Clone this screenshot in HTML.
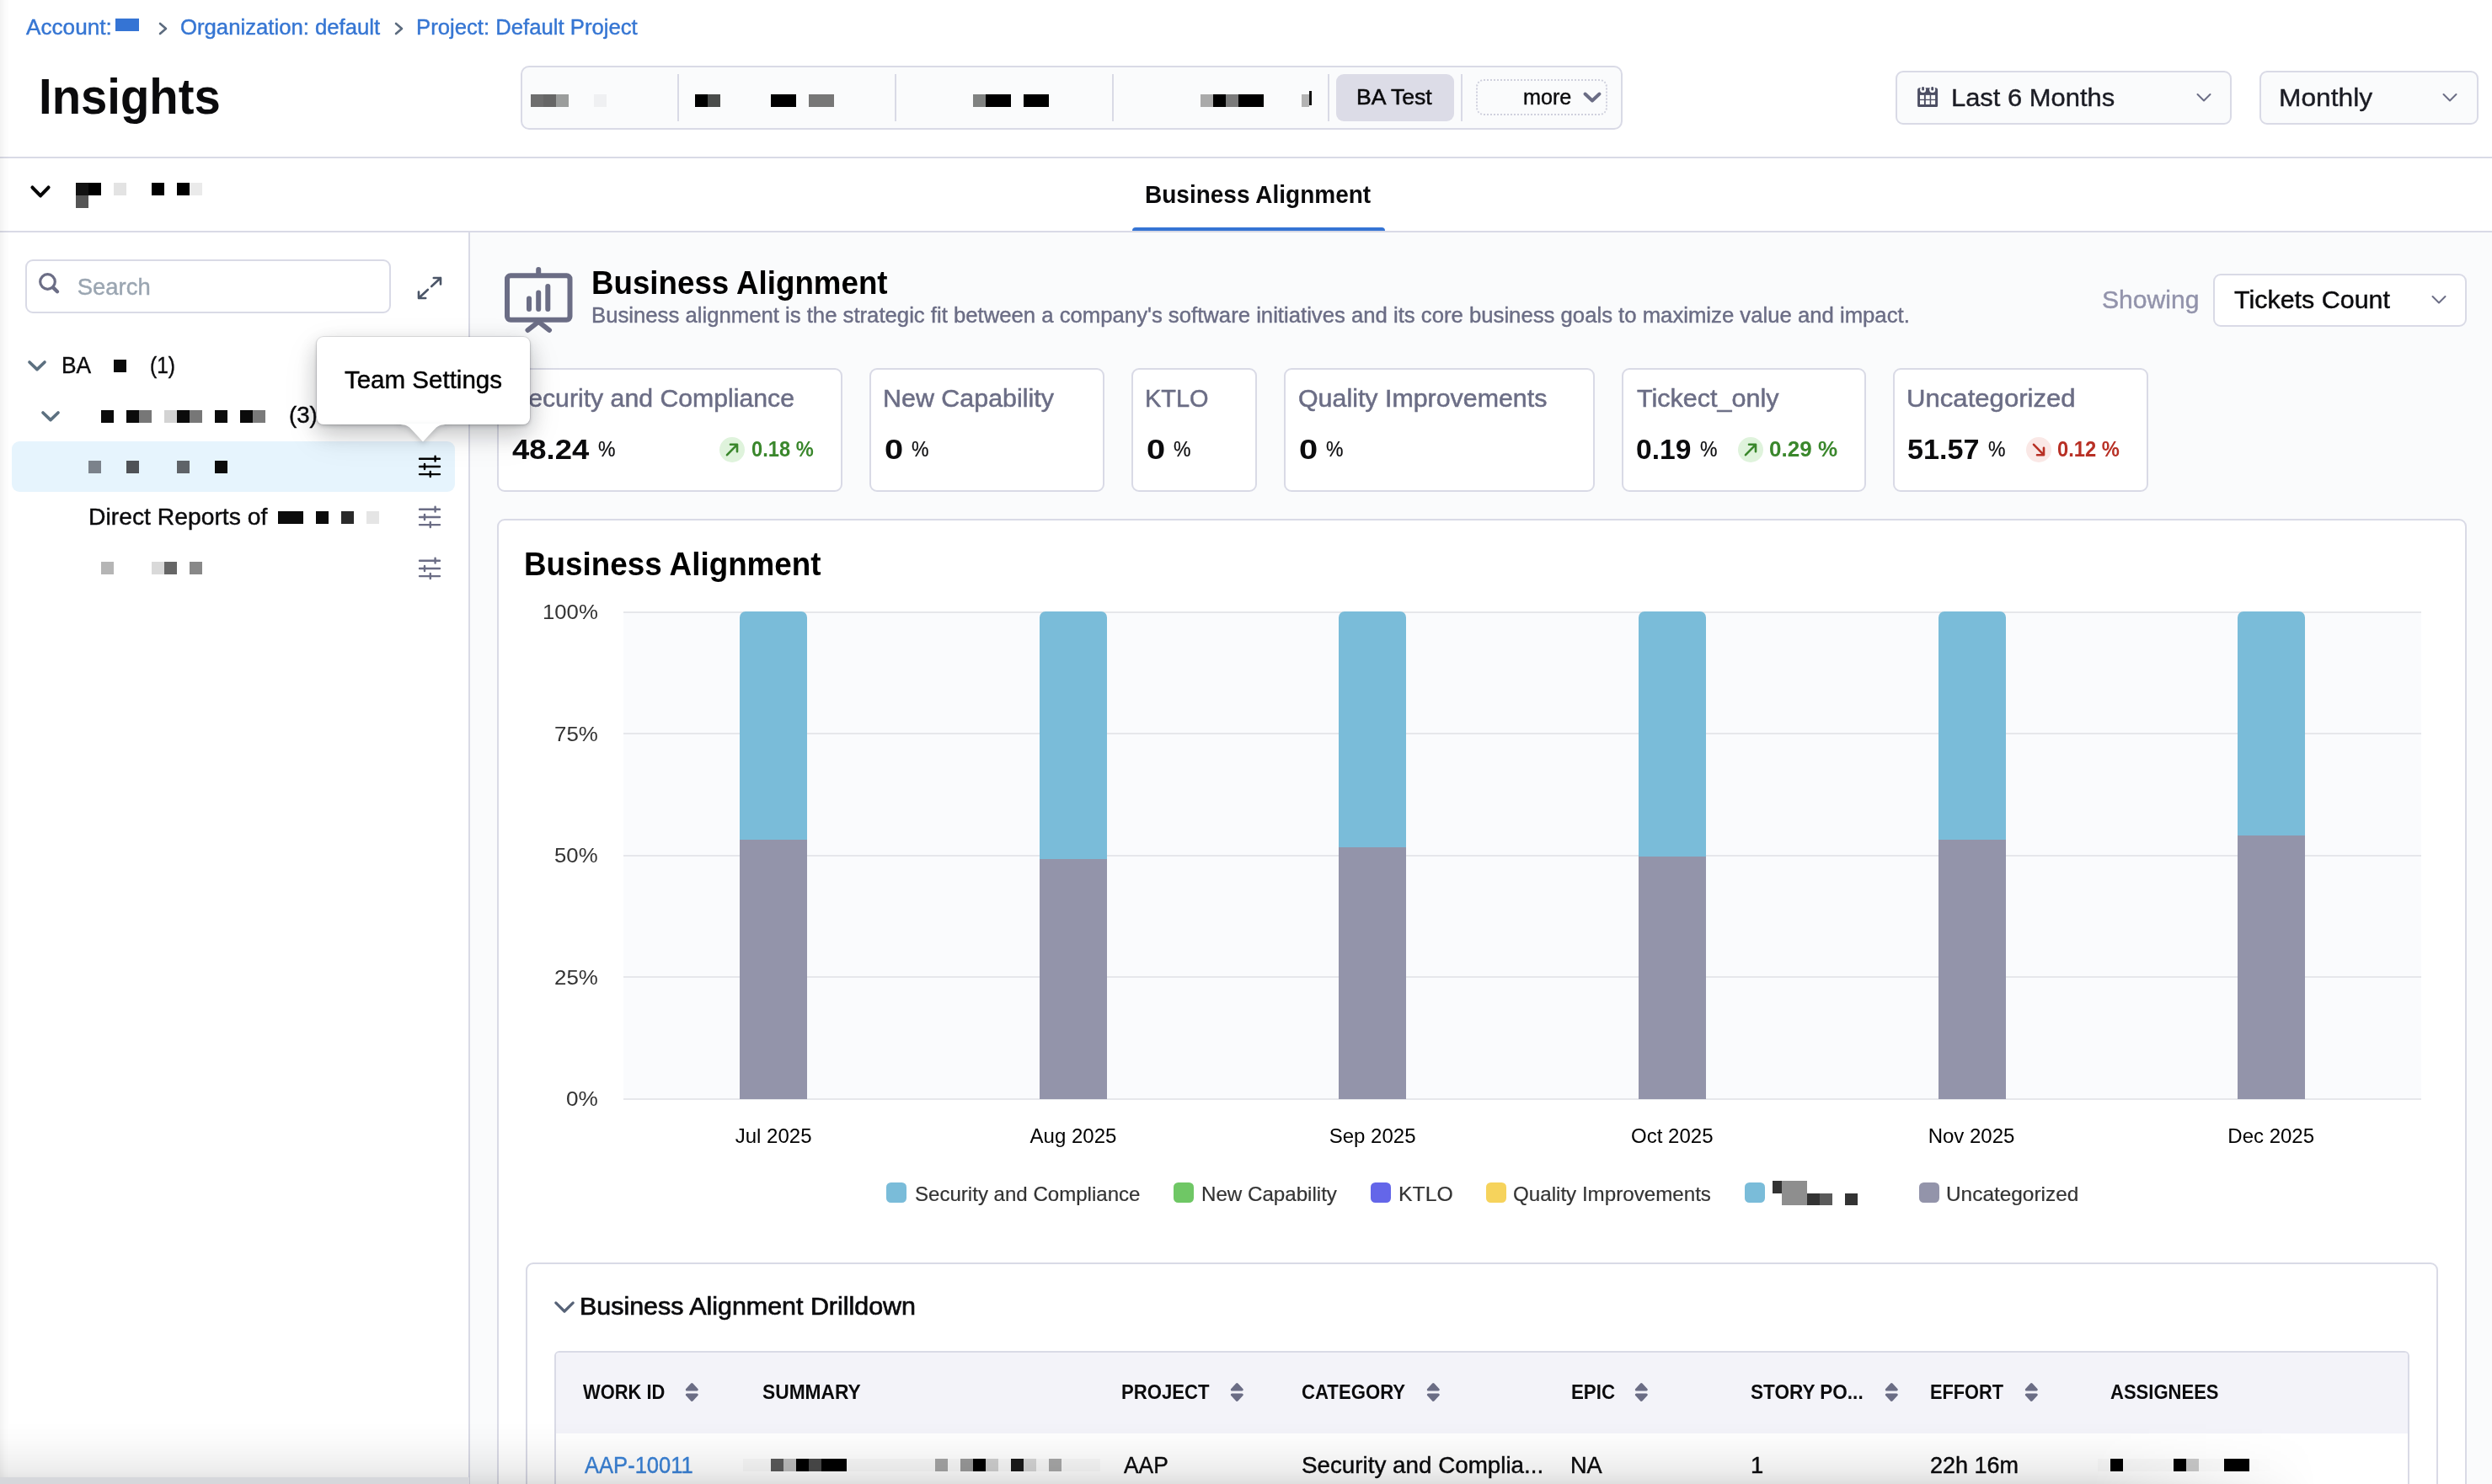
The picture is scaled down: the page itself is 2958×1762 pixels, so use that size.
<!DOCTYPE html>
<html lang="en"><head><meta charset="utf-8"><title>Insights - Business Alignment</title>
<style>
html,body{margin:0;padding:0;background:#fff;}
body{width:2958px;height:1762px;position:relative;overflow:hidden;font-family:"Liberation Sans",sans-serif;}
#app{position:absolute;left:0;top:0;width:2958px;height:1762px;will-change:transform;}
.b{position:absolute;box-sizing:border-box;display:block;}
.t{position:absolute;white-space:nowrap;display:block;transform-origin:0 0;}
</style></head><body><div id="app">
<div class="b" style="left:558px;top:276px;width:2400px;height:1486px;background:#fafbfc;"></div>
<div class="b" style="left:0px;top:186px;width:2958px;height:2px;background:#d9dae6;"></div>
<div class="b" style="left:0px;top:274px;width:2958px;height:2px;background:#d9dae6;"></div>
<div class="b" style="left:556px;top:276px;width:2px;height:1486px;background:#d9dae6;"></div>
<span class="t" style="left:30.50px;top:20.27px;font-size:25.32px;line-height:25.32px;color:#3676d3;transform:scaleX(1.0332);-webkit-text-stroke:0.42px #3676d3;">Account:</span>
<div class="b" style="left:136.5px;top:22px;width:28.5px;height:14.5px;background:#3574d4;"></div>
<svg class="b" style="left:187.5px;top:26px" width="12" height="16" viewBox="0 0 12 16"><path d="M2 2 L9 8 L2 14" fill="none" stroke="#5c6b7e" stroke-width="2.6" stroke-linecap="round" stroke-linejoin="round"/></svg>
<span class="t" style="left:213.84px;top:20.27px;font-size:25.32px;line-height:25.32px;color:#3676d3;transform:scaleX(1.0153);-webkit-text-stroke:0.42px #3676d3;">Organization: default</span>
<svg class="b" style="left:467.5px;top:26px" width="12" height="16" viewBox="0 0 12 16"><path d="M2 2 L9 8 L2 14" fill="none" stroke="#5c6b7e" stroke-width="2.6" stroke-linecap="round" stroke-linejoin="round"/></svg>
<span class="t" style="left:493.94px;top:20.27px;font-size:25.32px;line-height:25.32px;color:#3676d3;transform:scaleX(1.0150);-webkit-text-stroke:0.42px #3676d3;">Project: Default Project</span>
<span class="t" style="left:45.94px;top:85.89px;font-size:59.08px;line-height:59.08px;color:#0b0b0d;font-weight:700;transform:scaleX(0.9523);">Insights</span>
<div class="b" style="left:618px;top:78px;width:1308px;height:76px;background:#fafbfc;border:2px solid #d9dae6;border-radius:10px;"></div>
<div class="b" style="left:804px;top:88px;width:2px;height:56px;background:#d9dae6;"></div>
<div class="b" style="left:1062px;top:88px;width:2px;height:56px;background:#d9dae6;"></div>
<div class="b" style="left:1320px;top:88px;width:2px;height:56px;background:#d9dae6;"></div>
<div class="b" style="left:1576px;top:88px;width:2px;height:56px;background:#d9dae6;"></div>
<div class="b" style="left:1734px;top:88px;width:2px;height:56px;background:#d9dae6;"></div>
<div class="b" style="left:630px;top:112px;width:15px;height:15px;background:#6e6e6e;"></div>
<div class="b" style="left:645px;top:112px;width:15px;height:15px;background:#666666;"></div>
<div class="b" style="left:660px;top:112px;width:15px;height:15px;background:#9b9d9c;"></div>
<div class="b" style="left:705px;top:112px;width:15px;height:15px;background:#eff0f2;"></div>
<div class="b" style="left:825px;top:112px;width:15px;height:15px;background:#000;"></div>
<div class="b" style="left:840px;top:112px;width:15px;height:15px;background:#4a4c4b;"></div>
<div class="b" style="left:915px;top:112px;width:30px;height:15px;background:#000;"></div>
<div class="b" style="left:960px;top:112px;width:30px;height:15px;background:#777;"></div>
<div class="b" style="left:1155px;top:112px;width:15px;height:15px;background:#808281;"></div>
<div class="b" style="left:1170px;top:112px;width:30px;height:15px;background:#000;"></div>
<div class="b" style="left:1215px;top:112px;width:30px;height:15px;background:#000;"></div>
<div class="b" style="left:1425px;top:112px;width:15px;height:15px;background:#aaa;"></div>
<div class="b" style="left:1440px;top:112px;width:15px;height:15px;background:#000;"></div>
<div class="b" style="left:1455px;top:112px;width:15px;height:15px;background:#7a7a7a;"></div>
<div class="b" style="left:1470px;top:112px;width:30px;height:15px;background:#000;"></div>
<div class="b" style="left:1545px;top:112px;width:9px;height:15px;background:#b3b3b3;"></div>
<div class="b" style="left:1554px;top:108px;width:3px;height:17px;background:#111;"></div>
<div class="b" style="left:1586px;top:88px;width:140px;height:56px;background:#dcdce7;border-radius:9px;"></div>
<span class="t" style="left:1610.47px;top:102.57px;font-size:25.32px;line-height:25.32px;color:#0b0b0d;transform:scaleX(1.0504);-webkit-text-stroke:0.5px #0b0b0d;">BA Test</span>
<div class="b" style="left:1752px;top:94px;width:156px;height:43px;border:2px solid #cfd0dd;border-radius:9px;border-style:dotted;"></div>
<span class="t" style="left:1808.37px;top:102.57px;font-size:25.32px;line-height:25.32px;color:#0b0b0d;transform:scaleX(0.9927);-webkit-text-stroke:0.42px #0b0b0d;">more</span>
<svg class="b" style="left:1878px;top:108px" width="24" height="16" viewBox="0 0 24 16"><path d="M3.5 3.5 L12 11.5 L20.5 3.5" fill="none" stroke="#6b6d85" stroke-width="4" stroke-linecap="round" stroke-linejoin="round"/></svg>
<div class="b" style="left:2250px;top:84px;width:399px;height:64px;background:#fafbfc;border:2px solid #d9dae6;border-radius:9px;"></div>
<svg class="b" style="left:2275px;top:102px" width="26" height="26" viewBox="0 0 26 26"><path d="M1.1 4.7 a2.5 2.5 0 0 1 2.5 -2.5 h19 a2.5 2.5 0 0 1 2.5 2.5 v18.8 a1.5 1.5 0 0 1 -1.5 1.5 h-21 a1.5 1.5 0 0 1 -1.5 -1.5z" fill="#4c4e63"/>
<g fill="#fafbfc"><circle cx="7.6" cy="4.4" r="3.5"/><circle cx="18.7" cy="4.4" r="3.5"/>
<rect x="4" y="10.9" width="4.9" height="4.9"/><rect x="10.8" y="10.9" width="4.9" height="4.9"/><rect x="17.2" y="10.9" width="4.9" height="4.9"/>
<rect x="4" y="17.1" width="4.9" height="4.9"/><rect x="10.8" y="17.1" width="4.9" height="4.9"/><rect x="17.2" y="17.1" width="4.9" height="4.9"/></g>
<rect x="6.25" y="1" width="2.7" height="4.6" rx="1.35" fill="#4c4e63"/><rect x="17.35" y="1" width="2.7" height="4.6" rx="1.35" fill="#4c4e63"/></svg>
<span class="t" style="left:2315.53px;top:100.59px;font-size:29.54px;line-height:29.54px;color:#1b1c24;transform:scaleX(1.0464);-webkit-text-stroke:0.4px #1b1c24;">Last 6 Months</span>
<svg class="b" style="left:2607px;top:110px" width="18" height="12" viewBox="0 0 18 12"><path d="M1.5 2 L9 9.5 L16.5 2" fill="none" stroke="#6b6d85" stroke-width="2" stroke-linecap="round" stroke-linejoin="round"/></svg>
<div class="b" style="left:2682px;top:84px;width:260px;height:64px;background:#fafbfc;border:2px solid #d9dae6;border-radius:9px;"></div>
<span class="t" style="left:2705.46px;top:100.59px;font-size:29.54px;line-height:29.54px;color:#1b1c24;transform:scaleX(1.0755);-webkit-text-stroke:0.4px #1b1c24;">Monthly</span>
<svg class="b" style="left:2899px;top:110px" width="18" height="12" viewBox="0 0 18 12"><path d="M1.5 2 L9 9.5 L16.5 2" fill="none" stroke="#6b6d85" stroke-width="2" stroke-linecap="round" stroke-linejoin="round"/></svg>
<svg class="b" style="left:34px;top:218px" width="28" height="20" viewBox="0 0 28 20"><path d="M4.5 4.6 L14 14.4 L23.5 4.6" fill="none" stroke="#050506" stroke-width="4.2" stroke-linecap="round" stroke-linejoin="round"/></svg>
<div class="b" style="left:90px;top:217px;width:15px;height:15px;background:#111;"></div>
<div class="b" style="left:105px;top:217px;width:15px;height:15px;background:#000;"></div>
<div class="b" style="left:90px;top:232px;width:15px;height:15px;background:#555;"></div>
<div class="b" style="left:135px;top:217px;width:15px;height:15px;background:#e3e3e3;"></div>
<div class="b" style="left:180px;top:217px;width:15px;height:15px;background:#000;"></div>
<div class="b" style="left:210px;top:217px;width:15px;height:15px;background:#000;"></div>
<div class="b" style="left:225px;top:217px;width:15px;height:15px;background:#eaeaea;"></div>
<span class="t" style="left:1359.38px;top:215.89px;font-size:29.54px;line-height:29.54px;color:#0b0b0d;font-weight:700;transform:scaleX(0.9483);">Business Alignment</span>
<div class="b" style="left:1344px;top:270px;width:300px;height:4px;background:#3574d4;border-radius:5px 5px 0 0;"></div>
<div class="b" style="left:30px;top:308px;width:434px;height:64px;background:#fff;border:2px solid #d9dae6;border-radius:9px;"></div>
<svg class="b" style="left:44px;top:322px" width="28" height="28" viewBox="0 0 28 28"><circle cx="12.5" cy="12.5" r="8.8" fill="none" stroke="#6b6d85" stroke-width="3.2"/><path d="M19.3 19.6 L24 24.2" stroke="#6b6d85" stroke-width="4.4" stroke-linecap="round"/></svg>
<span class="t" style="left:91.77px;top:326.68px;font-size:27.43px;line-height:27.43px;color:#9aa5b1;-webkit-text-stroke:0.42px #9aa5b1;">Search</span>
<svg class="b" style="left:494px;top:326px" width="32" height="32" viewBox="0 0 32 32"><g fill="none" stroke="#4b5567" stroke-width="2.6" stroke-linecap="round" stroke-linejoin="round"><path d="M20.8 4 H29 V11.5 M29 4 L18.2 14"/><path d="M11.2 28 H3 V20.5 M3 28 L13.8 18"/></g></svg>
<svg class="b" style="left:32px;top:426.5px" width="24" height="16" viewBox="0 0 24 16"><path d="M3 3 L12 11.6 L21 3" fill="none" stroke="#5c7080" stroke-width="3.7" stroke-linecap="round" stroke-linejoin="round"/></svg>
<span class="t" style="left:73.29px;top:419.78px;font-size:27.43px;line-height:27.43px;color:#0b0b0d;transform:scaleX(0.9609);-webkit-text-stroke:0.42px #0b0b0d;">BA</span>
<div class="b" style="left:135px;top:427px;width:15px;height:15px;background:#0b0b0b;"></div>
<span class="t" style="left:177.53px;top:419.78px;font-size:27.43px;line-height:27.43px;color:#0b0b0d;transform:scaleX(0.8914);-webkit-text-stroke:0.42px #0b0b0d;">(1)</span>
<svg class="b" style="left:48px;top:486.5px" width="24" height="16" viewBox="0 0 24 16"><path d="M3 3 L12 11.6 L21 3" fill="none" stroke="#5c7080" stroke-width="3.7" stroke-linecap="round" stroke-linejoin="round"/></svg>
<div class="b" style="left:120px;top:487px;width:15px;height:15px;background:#0b0b0b;"></div>
<div class="b" style="left:150px;top:487px;width:15px;height:15px;background:#0b0b0b;"></div>
<div class="b" style="left:165px;top:487px;width:15px;height:15px;background:#777;"></div>
<div class="b" style="left:195px;top:487px;width:15px;height:15px;background:#d3d3d3;"></div>
<div class="b" style="left:210px;top:487px;width:15px;height:15px;background:#0b0b0b;"></div>
<div class="b" style="left:225px;top:487px;width:15px;height:15px;background:#777;"></div>
<div class="b" style="left:255px;top:487px;width:15px;height:15px;background:#0b0b0b;"></div>
<div class="b" style="left:285px;top:487px;width:15px;height:15px;background:#0b0b0b;"></div>
<div class="b" style="left:300px;top:487px;width:15px;height:15px;background:#7a7a7a;"></div>
<span class="t" style="left:343.34px;top:478.78px;font-size:27.43px;line-height:27.43px;color:#0b0b0d;transform:scaleX(1.0070);-webkit-text-stroke:0.42px #0b0b0d;">(3)</span>
<div class="b" style="left:14px;top:524px;width:526px;height:60px;background:#e6f4fd;border-radius:9px;"></div>
<div class="b" style="left:105px;top:547px;width:15px;height:15px;background:#7b828b;"></div>
<div class="b" style="left:150px;top:547px;width:15px;height:15px;background:#4f5257;"></div>
<div class="b" style="left:210px;top:547px;width:15px;height:15px;background:#5f6368;"></div>
<div class="b" style="left:255px;top:547px;width:15px;height:15px;background:#0b0b0b;"></div>
<svg class="b" style="left:496px;top:540px" width="28" height="28" viewBox="0 0 28 28"><g stroke="#000" stroke-width="2.4" stroke-linecap="round" fill="none"><path d="M2 4.8 H26 M2 14 H26 M2 23.1 H26"/><path d="M20.6 1.8 V7.6 M8 11 V17 M14.8 20 V26"/></g></svg>
<span class="t" style="left:104.54px;top:600.18px;font-size:27.43px;line-height:27.43px;color:#0b0b0d;transform:scaleX(1.0321);-webkit-text-stroke:0.42px #0b0b0d;">Direct Reports of</span>
<div class="b" style="left:330px;top:607px;width:30px;height:15px;background:#0b0b0b;"></div>
<div class="b" style="left:375px;top:607px;width:15px;height:15px;background:#0b0b0b;"></div>
<div class="b" style="left:405px;top:607px;width:15px;height:15px;background:#2a2a2a;"></div>
<div class="b" style="left:435px;top:607px;width:15px;height:15px;background:#e5e5e5;"></div>
<svg class="b" style="left:496px;top:600px" width="28" height="28" viewBox="0 0 28 28"><g stroke="#6b6d85" stroke-width="2.4" stroke-linecap="round" fill="none"><path d="M2 4.8 H26 M2 14 H26 M2 23.1 H26"/><path d="M20.6 1.8 V7.6 M8 11 V17 M14.8 20 V26"/></g></svg>
<div class="b" style="left:120px;top:667px;width:15px;height:15px;background:#b5b5b5;"></div>
<div class="b" style="left:180px;top:667px;width:15px;height:15px;background:#d9d9d9;"></div>
<div class="b" style="left:195px;top:667px;width:15px;height:15px;background:#666;"></div>
<div class="b" style="left:225px;top:667px;width:15px;height:15px;background:#888;"></div>
<svg class="b" style="left:496px;top:660.5px" width="28" height="28" viewBox="0 0 28 28"><g stroke="#6b6d85" stroke-width="2.4" stroke-linecap="round" fill="none"><path d="M2 4.8 H26 M2 14 H26 M2 23.1 H26"/><path d="M20.6 1.8 V7.6 M8 11 V17 M14.8 20 V26"/></g></svg>
<svg class="b" style="left:596px;top:314px" width="88" height="84" viewBox="0 0 88 84"><g fill="none" stroke="#6b6d85" stroke-width="6" stroke-linecap="round" stroke-linejoin="round">
<rect x="6" y="13.3" width="74.5" height="52.4" rx="4"/>
<path d="M43.2 6 V12"/><path d="M43.2 68 L30.5 78 M43.2 68 L56 78"/>
<path d="M32 40.5 V53 M43.2 33.5 V53 M54.3 26 V53"/></g></svg>
<span class="t" style="left:701.61px;top:316.65px;font-size:37.98px;line-height:37.98px;color:#000;font-weight:700;transform:scaleX(0.9670);">Business Alignment</span>
<span class="t" style="left:701.94px;top:362.27px;font-size:25.32px;line-height:25.32px;color:#6b6d85;transform:scaleX(1.0153);-webkit-text-stroke:0.42px #6b6d85;">Business alignment is the strategic fit between a company&#x27;s software initiatives and its core business goals to maximize value and impact.</span>
<span class="t" style="left:2495.15px;top:340.99px;font-size:29.54px;line-height:29.54px;color:#9293ab;transform:scaleX(1.0192);-webkit-text-stroke:0.42px #9293ab;">Showing</span>
<div class="b" style="left:2627px;top:324.5px;width:301px;height:63px;background:#fff;border:2px solid #d9dae6;border-radius:9px;"></div>
<span class="t" style="left:2652.09px;top:340.99px;font-size:29.54px;line-height:29.54px;color:#0b0b0d;transform:scaleX(1.0307);-webkit-text-stroke:0.42px #0b0b0d;">Tickets Count</span>
<svg class="b" style="left:2886px;top:350px" width="18" height="12" viewBox="0 0 18 12"><path d="M1.5 2 L9 9.5 L16.5 2" fill="none" stroke="#6b6d85" stroke-width="2" stroke-linecap="round" stroke-linejoin="round"/></svg>
<div class="b" style="left:590px;top:436.5px;width:410px;height:147px;background:#fff;border:2px solid #d9dae6;border-radius:9px;"></div>
<span class="t" style="left:607.14px;top:458.39px;font-size:29.54px;line-height:29.54px;color:#6b6d85;transform:scaleX(1.0235);-webkit-text-stroke:0.5px #6b6d85;">Security and Compliance</span>
<span class="t" style="left:607.95px;top:516.82px;font-size:33.76px;line-height:33.76px;color:#0b0b0d;font-weight:700;transform:scaleX(1.0794);">48.24</span>
<span class="t" style="left:710.19px;top:521.17px;font-size:25.32px;line-height:25.32px;color:#0b0b0d;transform:scaleX(0.9103);-webkit-text-stroke:0.2px #0b0b0d;">%</span>
<div class="b" style="left:854px;top:518.5px;width:30px;height:30px;background:#dff3dc;border-radius:15px;"></div>
<svg class="b" style="left:854px;top:518.5px" width="30" height="30" viewBox="0 0 30 30"><path d="M9 21.2 L21 8.8 M13 8.8 H21 V17.2" fill="none" stroke="#3a872c" stroke-width="2.6" stroke-linecap="round" stroke-linejoin="round"/></svg>
<span class="t" style="left:892.17px;top:521.37px;font-size:25.32px;line-height:25.32px;color:#3a872c;font-weight:700;transform:scaleX(0.9349);">0.18 %</span>
<div class="b" style="left:1032px;top:436.5px;width:279px;height:147px;background:#fff;border:2px solid #d9dae6;border-radius:9px;"></div>
<span class="t" style="left:1048.06px;top:458.39px;font-size:29.54px;line-height:29.54px;color:#6b6d85;transform:scaleX(1.0305);-webkit-text-stroke:0.5px #6b6d85;">New Capability</span>
<span class="t" style="left:1050.41px;top:516.82px;font-size:33.76px;line-height:33.76px;color:#0b0b0d;font-weight:700;transform:scaleX(1.1787);">0</span>
<span class="t" style="left:1082.19px;top:521.17px;font-size:25.32px;line-height:25.32px;color:#0b0b0d;transform:scaleX(0.9103);-webkit-text-stroke:0.2px #0b0b0d;">%</span>
<div class="b" style="left:1343px;top:436.5px;width:149px;height:147px;background:#fff;border:2px solid #d9dae6;border-radius:9px;"></div>
<span class="t" style="left:1359.19px;top:458.39px;font-size:29.54px;line-height:29.54px;color:#6b6d85;transform:scaleX(0.9785);-webkit-text-stroke:0.5px #6b6d85;">KTLO</span>
<span class="t" style="left:1361.41px;top:516.82px;font-size:33.76px;line-height:33.76px;color:#0b0b0d;font-weight:700;transform:scaleX(1.1787);">0</span>
<span class="t" style="left:1393.19px;top:521.17px;font-size:25.32px;line-height:25.32px;color:#0b0b0d;transform:scaleX(0.9103);-webkit-text-stroke:0.2px #0b0b0d;">%</span>
<div class="b" style="left:1524px;top:436.5px;width:369px;height:147px;background:#fff;border:2px solid #d9dae6;border-radius:9px;"></div>
<span class="t" style="left:1541.13px;top:458.39px;font-size:29.54px;line-height:29.54px;color:#6b6d85;transform:scaleX(1.0283);-webkit-text-stroke:0.5px #6b6d85;">Quality Improvements</span>
<span class="t" style="left:1542.41px;top:516.82px;font-size:33.76px;line-height:33.76px;color:#0b0b0d;font-weight:700;transform:scaleX(1.1787);">0</span>
<span class="t" style="left:1574.19px;top:521.17px;font-size:25.32px;line-height:25.32px;color:#0b0b0d;transform:scaleX(0.9103);-webkit-text-stroke:0.2px #0b0b0d;">%</span>
<div class="b" style="left:1925px;top:436.5px;width:290px;height:147px;background:#fff;border:2px solid #d9dae6;border-radius:9px;"></div>
<span class="t" style="left:1942.89px;top:458.39px;font-size:29.54px;line-height:29.54px;color:#6b6d85;transform:scaleX(1.0339);-webkit-text-stroke:0.5px #6b6d85;">Tickect_only</span>
<span class="t" style="left:1942.32px;top:516.82px;font-size:33.76px;line-height:33.76px;color:#0b0b0d;font-weight:700;transform:scaleX(0.9952);">0.19</span>
<span class="t" style="left:2017.59px;top:521.17px;font-size:25.32px;line-height:25.32px;color:#0b0b0d;transform:scaleX(0.9103);-webkit-text-stroke:0.2px #0b0b0d;">%</span>
<div class="b" style="left:2062.5px;top:518.5px;width:30px;height:30px;background:#dff3dc;border-radius:15px;"></div>
<svg class="b" style="left:2062.5px;top:518.5px" width="30" height="30" viewBox="0 0 30 30"><path d="M9 21.2 L21 8.8 M13 8.8 H21 V17.2" fill="none" stroke="#3a872c" stroke-width="2.6" stroke-linecap="round" stroke-linejoin="round"/></svg>
<span class="t" style="left:2099.59px;top:521.37px;font-size:25.32px;line-height:25.32px;color:#3a872c;font-weight:700;transform:scaleX(1.0281);">0.29 %</span>
<div class="b" style="left:2247px;top:436.5px;width:303px;height:147px;background:#fff;border:2px solid #d9dae6;border-radius:9px;"></div>
<span class="t" style="left:2263.17px;top:458.39px;font-size:29.54px;line-height:29.54px;color:#6b6d85;transform:scaleX(1.0538);-webkit-text-stroke:0.5px #6b6d85;">Uncategorized</span>
<span class="t" style="left:2264.48px;top:516.82px;font-size:33.76px;line-height:33.76px;color:#0b0b0d;font-weight:700;transform:scaleX(1.0112);">51.57</span>
<span class="t" style="left:2359.59px;top:521.17px;font-size:25.32px;line-height:25.32px;color:#0b0b0d;transform:scaleX(0.9103);-webkit-text-stroke:0.2px #0b0b0d;">%</span>
<div class="b" style="left:2404.5px;top:518.5px;width:30px;height:30px;background:#fae8e6;border-radius:15px;"></div>
<svg class="b" style="left:2404.5px;top:518.5px" width="30" height="30" viewBox="0 0 30 30"><path d="M9 8.8 L21 21.2 M13 21.2 H21 V12.8" fill="none" stroke="#b83025" stroke-width="2.6" stroke-linecap="round" stroke-linejoin="round"/></svg>
<span class="t" style="left:2441.67px;top:521.37px;font-size:25.32px;line-height:25.32px;color:#b83025;font-weight:700;transform:scaleX(0.9375);">0.12 %</span>
<div class="b" style="left:590px;top:616px;width:2338px;height:1200px;background:#fff;border:2px solid #d9dae6;border-radius:9px;"></div>
<span class="t" style="left:622.41px;top:650.65px;font-size:37.98px;line-height:37.98px;color:#000;font-weight:700;transform:scaleX(0.9698);">Business Alignment</span>
<div class="b" style="left:740px;top:726.6px;width:2134px;height:577.9999999999999px;background:#fafbfd;"></div>
<div class="b" style="left:740px;top:725.6px;width:2134px;height:2px;background:#e6e7eb;"></div>
<span class="t" style="left:644.07px;top:715.28px;font-size:24px;line-height:24px;color:#333;transform:scaleX(1.0721);">100%</span>
<div class="b" style="left:740px;top:870.1px;width:2134px;height:2px;background:#e6e7eb;"></div>
<span class="t" style="left:658.11px;top:859.78px;font-size:24px;line-height:24px;color:#333;transform:scaleX(1.0779);">75%</span>
<div class="b" style="left:740px;top:1014.6px;width:2134px;height:2px;background:#e6e7eb;"></div>
<span class="t" style="left:658.37px;top:1004.28px;font-size:24px;line-height:24px;color:#333;transform:scaleX(1.0723);">50%</span>
<div class="b" style="left:740px;top:1159.1px;width:2134px;height:2px;background:#e6e7eb;"></div>
<span class="t" style="left:658.11px;top:1148.78px;font-size:24px;line-height:24px;color:#333;transform:scaleX(1.0779);">25%</span>
<div class="b" style="left:740px;top:1303.6px;width:2134px;height:2px;background:#e6e7eb;"></div>
<span class="t" style="left:672.08px;top:1293.28px;font-size:24px;line-height:24px;color:#333;transform:scaleX(1.0900);">0%</span>
<div class="b" style="left:877.8px;top:726px;width:80px;height:271.1px;background:#7abcd9;border-radius:7px 7px 0 0;"></div>
<div class="b" style="left:877.8px;top:997.1px;width:80px;height:307.5px;background:#9394aa;"></div>
<span class="t" style="left:872.78px;top:1337.48px;font-size:24px;line-height:24px;color:#000;">Jul 2025</span>
<div class="b" style="left:1233.5px;top:726px;width:80px;height:293.6px;background:#7abcd9;border-radius:7px 7px 0 0;"></div>
<div class="b" style="left:1233.5px;top:1019.6px;width:80px;height:285.0px;background:#9394aa;"></div>
<span class="t" style="left:1222.61px;top:1337.48px;font-size:24px;line-height:24px;color:#000;">Aug 2025</span>
<div class="b" style="left:1589.2px;top:726px;width:80px;height:279.8px;background:#7abcd9;border-radius:7px 7px 0 0;"></div>
<div class="b" style="left:1589.2px;top:1005.8px;width:80px;height:298.8px;background:#9394aa;"></div>
<span class="t" style="left:1577.74px;top:1337.48px;font-size:24px;line-height:24px;color:#000;">Sep 2025</span>
<div class="b" style="left:1944.8px;top:726px;width:80px;height:290.8px;background:#7abcd9;border-radius:7px 7px 0 0;"></div>
<div class="b" style="left:1944.8px;top:1016.8px;width:80px;height:287.8px;background:#9394aa;"></div>
<span class="t" style="left:1936.09px;top:1337.48px;font-size:24px;line-height:24px;color:#000;">Oct 2025</span>
<div class="b" style="left:2300.5px;top:726px;width:80px;height:270.5px;background:#7abcd9;border-radius:7px 7px 0 0;"></div>
<div class="b" style="left:2300.5px;top:996.5px;width:80px;height:308.1px;background:#9394aa;"></div>
<span class="t" style="left:2288.66px;top:1337.48px;font-size:24px;line-height:24px;color:#000;">Nov 2025</span>
<div class="b" style="left:2656.2px;top:726px;width:80px;height:265.9px;background:#7abcd9;border-radius:7px 7px 0 0;"></div>
<div class="b" style="left:2656.2px;top:991.9px;width:80px;height:312.7px;background:#9394aa;"></div>
<span class="t" style="left:2644.33px;top:1337.48px;font-size:24px;line-height:24px;color:#000;">Dec 2025</span>
<div class="b" style="left:1052px;top:1403.8px;width:24px;height:24px;background:#7abcd9;border-radius:5.5px;"></div>
<span class="t" style="left:1085.52px;top:1405.68px;font-size:24px;line-height:24px;color:#333;transform:scaleX(1.0025);-webkit-text-stroke:0.2px #333;">Security and Compliance</span>
<div class="b" style="left:1393px;top:1403.8px;width:24px;height:24px;background:#6fc765;border-radius:5.5px;"></div>
<span class="t" style="left:1425.57px;top:1405.68px;font-size:24px;line-height:24px;color:#333;transform:scaleX(1.0054);-webkit-text-stroke:0.2px #333;">New Capability</span>
<div class="b" style="left:1627px;top:1403.8px;width:24px;height:24px;background:#6466e9;border-radius:5.5px;"></div>
<span class="t" style="left:1659.52px;top:1405.68px;font-size:24px;line-height:24px;color:#333;transform:scaleX(1.0316);-webkit-text-stroke:0.2px #333;">KTLO</span>
<div class="b" style="left:1764px;top:1403.8px;width:24px;height:24px;background:#f6d35c;border-radius:5.5px;"></div>
<span class="t" style="left:1796.41px;top:1405.68px;font-size:24px;line-height:24px;color:#333;transform:scaleX(1.0065);-webkit-text-stroke:0.2px #333;">Quality Improvements</span>
<div class="b" style="left:2071px;top:1403.8px;width:24px;height:24px;background:#7abcd9;border-radius:5.5px;"></div>
<div class="b" style="left:2104px;top:1402px;width:11px;height:15px;background:#333;"></div>
<div class="b" style="left:2115px;top:1402px;width:30px;height:29px;background:#8e8e8e;"></div>
<div class="b" style="left:2145px;top:1417px;width:15px;height:14px;background:#333;"></div>
<div class="b" style="left:2160px;top:1417px;width:15px;height:14px;background:#5a5a5a;"></div>
<div class="b" style="left:2190px;top:1417px;width:15px;height:14px;background:#333;"></div>
<div class="b" style="left:2277.6px;top:1403.8px;width:24px;height:24px;background:#9394aa;border-radius:5.5px;"></div>
<span class="t" style="left:2310.17px;top:1405.68px;font-size:24px;line-height:24px;color:#333;transform:scaleX(1.0165);-webkit-text-stroke:0.2px #333;">Uncategorized</span>
<div class="b" style="left:624px;top:1498.5px;width:2270px;height:400px;background:#fff;border:2px solid #d9dae6;border-radius:9px;"></div>
<svg class="b" style="left:656px;top:1542px" width="28" height="20" viewBox="0 0 28 20"><path d="M3.8 4.9 L14 15 L24.2 4.9" fill="none" stroke="#566277" stroke-width="3.2" stroke-linecap="round" stroke-linejoin="round"/></svg>
<span class="t" style="left:688.37px;top:1535.99px;font-size:29.54px;line-height:29.54px;color:#0b0b0d;transform:scaleX(1.0299);-webkit-text-stroke:0.7px #0b0b0d;">Business Alignment Drilldown</span>
<div class="b" style="left:658px;top:1604px;width:2202px;height:300px;background:#fff;border:2px solid #d9dae6;border-radius:6px;"></div>
<div class="b" style="left:660px;top:1606px;width:2198px;height:96px;background:#f3f3f9;border-radius:4px 4px 0 0;"></div>
<span class="t" style="left:692.00px;top:1641.95px;font-size:23.21px;line-height:23.21px;color:#0b0b0d;font-weight:700;transform:scaleX(0.9435);">WORK ID</span>
<svg class="b" style="left:813px;top:1640px" width="17" height="26" viewBox="0 0 17 26"><path d="M8.3 3.6 L14.3 10 H2.3 Z M8.3 22.4 L14.3 16 H2.3 Z" fill="#6b6d85" stroke="#6b6d85" stroke-width="3" stroke-linejoin="round"/></svg>
<span class="t" style="left:905.43px;top:1641.95px;font-size:23.21px;line-height:23.21px;color:#0b0b0d;font-weight:700;transform:scaleX(0.9814);">SUMMARY</span>
<span class="t" style="left:1331.16px;top:1641.95px;font-size:23.21px;line-height:23.21px;color:#0b0b0d;font-weight:700;transform:scaleX(0.9539);">PROJECT</span>
<svg class="b" style="left:1459.5px;top:1640px" width="17" height="26" viewBox="0 0 17 26"><path d="M8.3 3.6 L14.3 10 H2.3 Z M8.3 22.4 L14.3 16 H2.3 Z" fill="#6b6d85" stroke="#6b6d85" stroke-width="3" stroke-linejoin="round"/></svg>
<span class="t" style="left:1545.11px;top:1641.95px;font-size:23.21px;line-height:23.21px;color:#0b0b0d;font-weight:700;transform:scaleX(0.9550);">CATEGORY</span>
<svg class="b" style="left:1693px;top:1640px" width="17" height="26" viewBox="0 0 17 26"><path d="M8.3 3.6 L14.3 10 H2.3 Z M8.3 22.4 L14.3 16 H2.3 Z" fill="#6b6d85" stroke="#6b6d85" stroke-width="3" stroke-linejoin="round"/></svg>
<span class="t" style="left:1864.55px;top:1641.95px;font-size:23.21px;line-height:23.21px;color:#0b0b0d;font-weight:700;transform:scaleX(0.9609);">EPIC</span>
<svg class="b" style="left:1939.5px;top:1640px" width="17" height="26" viewBox="0 0 17 26"><path d="M8.3 3.6 L14.3 10 H2.3 Z M8.3 22.4 L14.3 16 H2.3 Z" fill="#6b6d85" stroke="#6b6d85" stroke-width="3" stroke-linejoin="round"/></svg>
<span class="t" style="left:2078.44px;top:1641.95px;font-size:23.21px;line-height:23.21px;color:#0b0b0d;font-weight:700;transform:scaleX(0.9717);">STORY PO...</span>
<svg class="b" style="left:2236.5px;top:1640px" width="17" height="26" viewBox="0 0 17 26"><path d="M8.3 3.6 L14.3 10 H2.3 Z M8.3 22.4 L14.3 16 H2.3 Z" fill="#6b6d85" stroke="#6b6d85" stroke-width="3" stroke-linejoin="round"/></svg>
<span class="t" style="left:2291.09px;top:1641.95px;font-size:23.21px;line-height:23.21px;color:#0b0b0d;font-weight:700;transform:scaleX(0.9376);">EFFORT</span>
<svg class="b" style="left:2402.5px;top:1640px" width="17" height="26" viewBox="0 0 17 26"><path d="M8.3 3.6 L14.3 10 H2.3 Z M8.3 22.4 L14.3 16 H2.3 Z" fill="#6b6d85" stroke="#6b6d85" stroke-width="3" stroke-linejoin="round"/></svg>
<span class="t" style="left:2505.25px;top:1641.95px;font-size:23.21px;line-height:23.21px;color:#0b0b0d;font-weight:700;transform:scaleX(0.9493);">ASSIGNEES</span>
<div class="b" style="left:882px;top:1732px;width:424px;height:15px;background:rgba(0,0,0,.022);"></div>
<div class="b" style="left:2490px;top:1732px;width:210px;height:15px;background:rgba(0,0,0,.02);-webkit-mask-image:linear-gradient(90deg,#000 70%,transparent);"></div>
<span class="t" style="left:694.00px;top:1725.78px;font-size:27.43px;line-height:27.43px;color:#3a82d6;transform:scaleX(0.9321);-webkit-text-stroke:0.42px #3a82d6;">AAP-10011</span>
<div class="b" style="left:915px;top:1732px;width:15px;height:15px;background:#5a5a5a;"></div>
<div class="b" style="left:930px;top:1732px;width:15px;height:15px;background:#bdbdbd;"></div>
<div class="b" style="left:945px;top:1732px;width:15px;height:15px;background:#000;"></div>
<div class="b" style="left:960px;top:1732px;width:15px;height:15px;background:#4a4a4a;"></div>
<div class="b" style="left:975px;top:1732px;width:30px;height:15px;background:#000;"></div>
<div class="b" style="left:1110px;top:1732px;width:15px;height:15px;background:#a5a5a5;"></div>
<div class="b" style="left:1140px;top:1732px;width:15px;height:15px;background:#9a9a9a;"></div>
<div class="b" style="left:1155px;top:1732px;width:15px;height:15px;background:#000;"></div>
<div class="b" style="left:1170px;top:1732px;width:15px;height:15px;background:#d0d0d0;"></div>
<div class="b" style="left:1200px;top:1732px;width:15px;height:15px;background:#1a1a1a;"></div>
<div class="b" style="left:1215px;top:1732px;width:15px;height:15px;background:#d5d5d5;"></div>
<div class="b" style="left:1245px;top:1732px;width:15px;height:15px;background:#a8a8a8;"></div>
<span class="t" style="left:1333.60px;top:1725.78px;font-size:27.43px;line-height:27.43px;color:#0b0b0d;transform:scaleX(0.9614);-webkit-text-stroke:0.42px #0b0b0d;">AAP</span>
<span class="t" style="left:1545.15px;top:1725.78px;font-size:27.43px;line-height:27.43px;color:#0b0b0d;transform:scaleX(1.0131);-webkit-text-stroke:0.42px #0b0b0d;">Security and Complia...</span>
<span class="t" style="left:1863.83px;top:1725.78px;font-size:27.43px;line-height:27.43px;color:#0b0b0d;transform:scaleX(0.9901);-webkit-text-stroke:0.42px #0b0b0d;">NA</span>
<span class="t" style="left:2077.94px;top:1725.78px;font-size:27.43px;line-height:27.43px;color:#0b0b0d;-webkit-text-stroke:0.42px #0b0b0d;">1</span>
<span class="t" style="left:2291.15px;top:1725.78px;font-size:27.43px;line-height:27.43px;color:#0b0b0d;transform:scaleX(0.9841);-webkit-text-stroke:0.42px #0b0b0d;">22h 16m</span>
<div class="b" style="left:2505px;top:1732px;width:15px;height:15px;background:#000;"></div>
<div class="b" style="left:2580px;top:1732px;width:15px;height:15px;background:#000;"></div>
<div class="b" style="left:2595px;top:1732px;width:15px;height:15px;background:#c8c8c8;"></div>
<div class="b" style="left:2640px;top:1732px;width:30px;height:15px;background:#000;"></div>
<div class="b" style="left:376px;top:399.5px;width:253px;height:104.5px;background:#fff;border-radius:8px;box-shadow:0 0 0 1px rgba(16,22,26,.1),0 2px 4px rgba(16,22,26,.2),0 9px 26px rgba(16,22,26,.2),0 14px 42px rgba(16,22,26,.1);"></div>
<svg class="b" style="left:472px;top:503px;filter:drop-shadow(0 3px 3px rgba(16,22,26,.18));" width="60" height="26" viewBox="0 0 60 26"><path d="M0 0 H60 V1 C50 1 47 3 43 7.5 L30 21.5 L17 7.5 C13 3 10 1 0 1 Z" fill="#fff"/></svg>
<span class="t" style="left:408.91px;top:435.79px;font-size:29.54px;line-height:29.54px;color:#000;-webkit-text-stroke:0.42px #000;">Team Settings</span>
<div class="b" style="left:0;top:0;width:12px;height:1762px;background:linear-gradient(90deg,rgba(0,0,0,.05),rgba(0,0,0,.02) 45%,rgba(0,0,0,0));"></div>
<div class="b" style="left:0;top:1688px;width:2958px;height:74px;background:linear-gradient(180deg,rgba(0,0,0,0),rgba(0,0,0,.012) 25%,rgba(0,0,0,.035) 50%,rgba(0,0,0,.075) 80%,rgba(0,0,0,.125));-webkit-mask-image:linear-gradient(90deg,#000 0,#000 84%,transparent 93%);mask-image:linear-gradient(90deg,#000 0,#000 84%,transparent 93%);"></div>
<div class="b" style="left:0;top:1754px;width:557px;height:8px;background:#d6d7db;"></div>
</div></body></html>
